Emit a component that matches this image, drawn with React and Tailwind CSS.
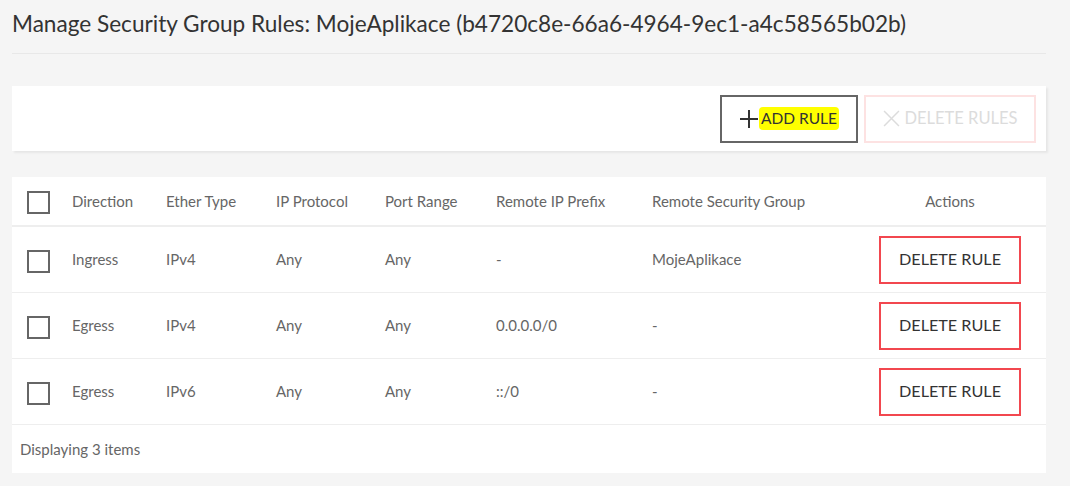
import React from "react";

const rows = [
  { dir: "Ingress", ether: "IPv4", proto: "Any", port: "Any", prefix: "-", group: "MojeAplikace" },
  { dir: "Egress", ether: "IPv4", proto: "Any", port: "Any", prefix: "0.0.0.0/0", group: "-" },
  { dir: "Egress", ether: "IPv6", proto: "Any", port: "Any", prefix: "::/0", group: "-" },
];

const Checkbox = () => (
  <div className="w-[23px] h-[23px] border-2 border-[#666] mt-[3px]" />
);

const App = () => {
  return (
    <div
      className="w-[1070px] h-[486px] bg-[#f5f5f5] overflow-hidden text-[#666]"
      style={{ fontFamily: "Lato, 'Noto Sans', sans-serif" }}
    >
      <div className="pl-3 pr-6 pt-[9px]">
        <h1 className="text-[22.6px] leading-[30px] text-[#333] pb-[14px] border-b border-[#e8e8e8]">
          Manage Security Group Rules: MojeAplikace (b4720c8e-66a6-4964-9ec1-a4c58565b02b)
        </h1>
      </div>

      <div className="ml-3 w-[1034px] mt-[32px] bg-white shadow-[2px_2px_2px_rgba(0,0,0,0.06)] h-[65px] flex items-center justify-end pr-[10px] gap-[6px]">
        <button className="w-[138px] h-[48px] border-2 border-[#666] flex items-center justify-center text-[15.5px] text-[#333]">
          <svg width="20" height="20" viewBox="0 0 20 20">
            <path d="M10 1v18M1 10h18" stroke="#333" strokeWidth="2" fill="none" />
          </svg>
          <span className="bg-[#ffff00] px-[2px] rounded-sm">ADD RULE</span>
        </button>
        <button className="w-[172px] h-[48px] border-2 border-[#fde2e2] flex items-center justify-center gap-[5px] text-[16.5px] text-[#dcdcdc]">
          <svg width="17" height="17" viewBox="0 0 16 16">
            <path d="M1 1l14 14M15 1L1 15" stroke="#dcdcdc" strokeWidth="1.4" fill="none" />
          </svg>
          DELETE RULES
        </button>
      </div>

      <div className="ml-3 w-[1034px] mt-[26px] bg-white text-[15px]">
        <div className="flex items-center h-[50px] border-b-2 border-[#eeeeee]">
          <div className="w-[60px] pl-[15px]"><Checkbox /></div>
          <div className="w-[94px]">Direction</div>
          <div className="w-[110px]">Ether Type</div>
          <div className="w-[109px]">IP Protocol</div>
          <div className="w-[111px]">Port Range</div>
          <div className="w-[156px]">Remote IP Prefix</div>
          <div className="w-[228px]">Remote Security Group</div>
          <div className="w-[140px] text-center">Actions</div>
        </div>
        {rows.map((r, i) => (
          <div key={i} className="flex items-center h-[66px] border-b border-[#eeeeee]">
            <div className="w-[60px] pl-[15px]"><Checkbox /></div>
            <div className="w-[94px]">{r.dir}</div>
            <div className="w-[110px]">{r.ether}</div>
            <div className="w-[109px]">{r.proto}</div>
            <div className="w-[111px]">{r.port}</div>
            <div className="w-[156px]">{r.prefix}</div>
            <div className="w-[227px]">{r.group}</div>
            <button className="w-[142px] h-[48px] border-2 border-[#f2474f] text-[#333] text-[16.2px]">
              DELETE RULE
            </button>
          </div>
        ))}
        <div className="h-[48px] flex items-center pl-2 text-[15px]">Displaying 3 items</div>
      </div>
    </div>
  );
};

export default App;
